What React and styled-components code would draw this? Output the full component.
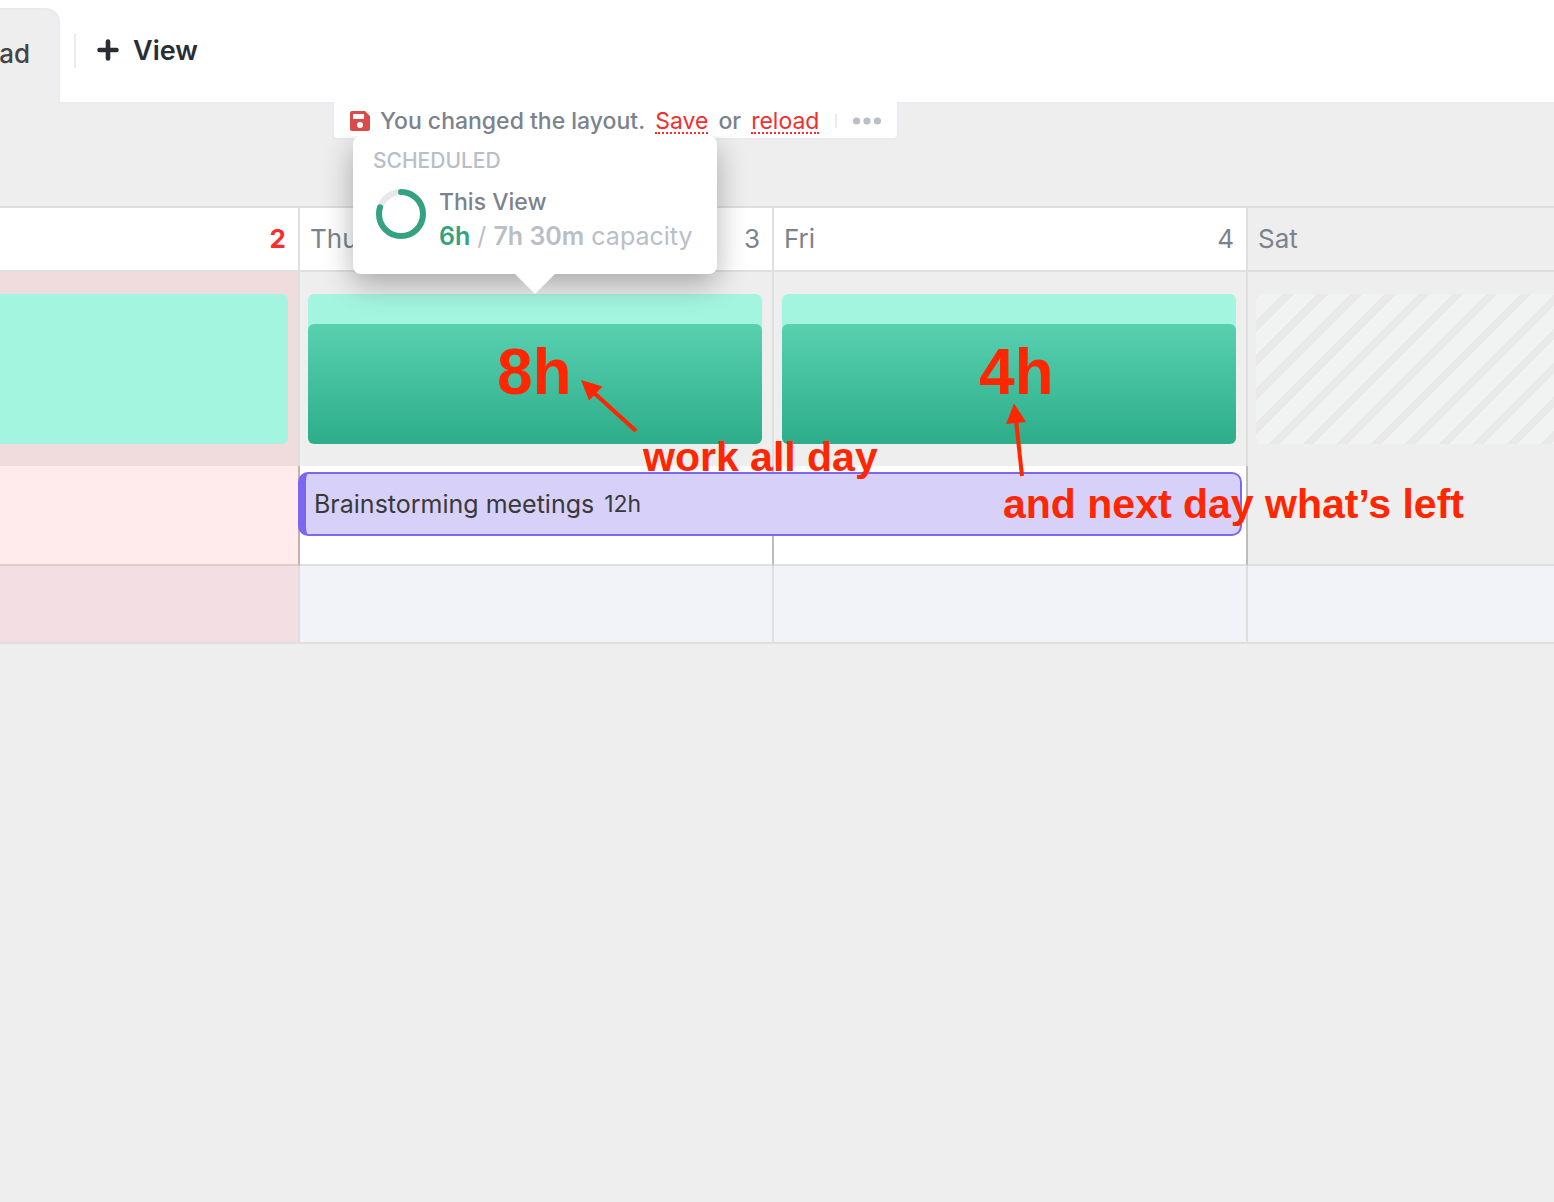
import React from "react";
import styled, { createGlobalStyle, css } from "styled-components";

const GlobalStyle = createGlobalStyle`
  *, *::before, *::after { box-sizing: border-box; }
  body {
    margin: 0;
    background: #eee;
    font-family: Inter, "Open Sans", sans-serif;
    color: #7c828d;
  }
  button { margin: 0; border: 0; background: none; font: inherit; cursor: pointer; }
`;

const Page = styled.div`
  min-height: 100vh;
  overflow: hidden;
`;

const TabBar = styled.header`
  display: flex;
  align-items: flex-start;
  padding-top: 8px;
  height: 104px;
  background: #fff;
  box-shadow: inset 0 -2px #e9ebf0;
`;

const Tab = styled.button`
  && {
    width: 60px;
    height: 96px;
    padding: 0 28px 8px 0;
    border: 2px solid #e9ebf0;
    border-width: 2px 2px 0 0;
    border-radius: 0 14px 0 0;
    background: #eee;
    color: #444;
    font-size: 26px;
    font-weight: 500;
    display: flex;
    align-items: center;
    justify-content: flex-end;
  }
`;

const Divider = styled.span`
  width: 2px;
  height: ${(p) => p.$height}px;
  margin: ${(p) => p.$margin};
  background: #e9ebf0;
`;

const AddView = styled.button`
  && {
    display: flex;
    align-items: center;
    gap: 14px;
    height: 84px;
    padding: 0;
    color: #292d34;
    font-size: 27px;
    font-weight: 600;
  }
`;

const NoticeArea = styled.div`
  display: flex;
  height: 104px;
  margin-top: -2px;
  padding-left: 332px;
`;

const Notice = styled.div`
  display: flex;
  align-items: center;
  height: 38px;
  padding: 2px 16px 0;
  white-space: nowrap;
  background: #fff;
  border: 2px solid #e9ebf0;
  border-top: 0;
  border-radius: 0 0 6px 6px;
  font-size: 23px;
  line-height: 28px;
  font-weight: 500;
`;

const NoticeText = styled.span`
  display: flex;
  gap: 10px;
  margin-left: 10px;
`;

const NoticeLink = styled.a`
  height: 27px;
  color: #f12f2f;
  font-weight: 400;
  text-decoration: none;
  border-bottom: 2px dotted #f12f2f;
`;

const MoreButton = styled.button`
  && { display: flex; padding: 0; }
`;

const Board = styled.main`
  position: relative;
  border-top: 2px solid #dfdfdf;
`;

const Row = styled.div`
  display: grid;
  grid-template-columns: 300fr 474fr 474fr 306fr;
  height: ${(p) => p.$height}px;
`;

const Cell = styled.div`
  grid-row: 1;
  min-width: 0;
  background: ${(p) => p.$bg};
  border-right: 2px solid ${(p) => p.$line || "#dfdfdf"};
  border-bottom: ${(p) => (p.$bottom ? `2px solid ${p.$bottom}` : "0")};
  &:nth-child(1) { grid-column: 1; }
  &:nth-child(2) { grid-column: 2; }
  &:nth-child(3) { grid-column: 3; }
  &:nth-child(4) { grid-column: 4; border-right: 0; }
`;

const DayCell = styled(Cell)`
  display: flex;
  align-items: center;
  justify-content: space-between;
  padding: 0 12px 0 10px;
  font-size: 26px;
  line-height: 32px;
`;

const DayNumber = styled.span`
  margin-left: auto;
  ${(p) => p.$today && css`color: #fd2b2b; font-weight: 700;`}
`;

const LoadCell = styled(Cell)`
  padding: 22px ${(p) => (p.$bleedRight ? 0 : 10)}px 22px ${(p) => (p.$bleedLeft ? 0 : 8)}px;
`;

const Capacity = styled.div`
  position: relative;
  display: flex;
  flex-direction: column;
  justify-content: flex-end;
  height: 150px;
  border-radius: ${(p) => p.$radius || "6px"};
  background: ${(p) => p.$off
    ? "repeating-linear-gradient(135deg, #e8e9e8 0 3px, #f1f3f2 3px 19px, #e8e9e8 19px 24px)"
    : "#a4f5e0"};
`;

const Load = styled.div`
  height: 120px;
  border-radius: 6px;
  background: linear-gradient(#58d1af, #2dad8a);
`;

const Popover = styled.section`
  position: absolute;
  z-index: 3;
  left: 50%;
  bottom: calc(100% + 20px);
  transform: translateX(-50%);
  width: 364px;
  height: 138px;
  padding: 12px 20px;
  border-radius: 8px;
  background: #fff;
  box-shadow: 0 10px 30px rgba(0, 0, 0, 0.3);
  clip-path: inset(0 -60px -60px -60px);
  white-space: nowrap;
  &::after {
    content: "";
    position: absolute;
    top: 100%;
    left: 50%;
    margin-left: -20px;
    border: 20px solid transparent;
    border-top-color: #fff;
    border-bottom: 0;
  }
`;

const PopoverTitle = styled.h2`
  margin: 0 0 12px;
  color: #b9bec7;
  font-size: 21px;
  line-height: 26px;
  font-weight: 500;
`;

const Summary = styled.div`
  display: flex;
  align-items: flex-start;
  gap: 10px;
`;

const SummaryName = styled.div`
  font-size: 23px;
  line-height: 32px;
  font-weight: 500;
`;

const SummaryHours = styled.div`
  color: #b9bec7;
  font-size: 25px;
  line-height: 36px;
  b { font-weight: 600; }
  b:first-child { color: #34a181; }
`;

const Task = styled.button`
  && {
    grid-row: 1;
    grid-column: 2 / 4;
    z-index: 1;
    display: flex;
    align-items: center;
    gap: 10px;
    height: 64px;
    margin: 6px 6px 0 -2px;
    padding: 0 8px;
    border: 2px solid #7b68ee;
    border-left-width: 8px;
    border-radius: 10px;
    background: #d7d1fa;
    color: #393939;
    font-size: 25px;
    text-align: left;
  }
`;

const TaskTime = styled.span`
  font-size: 23px;
`;

const Note = styled.span`
  position: absolute;
  z-index: 4;
  left: ${(p) => p.$x}px;
  top: ${(p) => p.$y}px;
  color: #ff2600;
  font-family: "Liberation Sans", Arial, sans-serif;
  font-weight: 700;
  font-size: ${(p) => (p.$large ? 64 : 41)}px;
  line-height: 1;
  white-space: nowrap;
`;

const Arrows = styled.svg`
  position: absolute;
  z-index: 4;
  left: 0;
  top: 0;
  pointer-events: none;
`;

const PlusIcon = () => (
  <svg width="22" height="22" viewBox="0 0 22 22" fill="none" stroke="currentColor" strokeWidth="4.600" strokeLinecap="round" aria-hidden="true">
    <path d="M11 2.500v17M2.500 11h17" />
  </svg>
);

const SaveIcon = () => (
  <svg width="20" height="20" viewBox="0 0 20 20" aria-hidden="true">
    <path fill="#d94b4b" fillRule="evenodd" d="M2 0h13l5 5v13a2 2 0 0 1-2 2H2a2 2 0 0 1-2-2V2a2 2 0 0 1 2-2ZM3 3v5h11V3ZM10 11a3 3 0 1 0 0 6a3 3 0 0 0 0-6Z" />
  </svg>
);

const MoreIcon = () => (
  <svg width="28" height="8" viewBox="0 0 28 8" fill="#b9bec7" aria-hidden="true">
    <circle cx="3.600" cy="4" r="3.600" />
    <circle cx="14" cy="4" r="3.600" />
    <circle cx="24.400" cy="4" r="3.600" />
  </svg>
);

const Ring = () => (
  <svg width="56" height="56" viewBox="0 0 56 56" fill="none" strokeWidth="6" aria-hidden="true">
    <circle cx="28" cy="28" r="22" stroke="#e6e8ea" />
    <circle cx="28" cy="28" r="22" stroke="#34a181" strokeLinecap="round" pathLength="100" strokeDasharray="80 100" transform="rotate(-90 28 28)" />
  </svg>
);

export default function App() {
  return (
    <Page>
      <GlobalStyle />
      <TabBar>
        <Tab type="button">ad</Tab>
        <Divider $height={34} $margin="26px 21px 0 14px" />
        <AddView type="button"><PlusIcon />View</AddView>
      </TabBar>

      <NoticeArea>
        <Notice>
          <SaveIcon />
          <NoticeText>
            <span>You changed the layout.</span>
            <NoticeLink href="#save">Save</NoticeLink>
            <span>or</span>
            <NoticeLink href="#reload">reload</NoticeLink>
          </NoticeText>
          <Divider $height={14} $margin="0 16px" />
          <MoreButton type="button" aria-label="More"><MoreIcon /></MoreButton>
        </Notice>
      </NoticeArea>

      <Board>
        <Row $height={64}>
          <DayCell $bg="#fff" $bottom="#dfdfdf"><DayNumber $today>2</DayNumber></DayCell>
          <DayCell $bg="#fff" $bottom="#dfdfdf">Thu<DayNumber>3</DayNumber></DayCell>
          <DayCell $bg="#fff" $bottom="#dfdfdf">Fri<DayNumber>4</DayNumber></DayCell>
          <DayCell $bg="#eee" $bottom="#dfdfdf">Sat</DayCell>
        </Row>

        <Row $height={194}>
          <LoadCell $bg="#f0dcdc" $bleedLeft><Capacity $radius="0 6px 6px 0" /></LoadCell>
          <LoadCell $bg="#eee">
            <Capacity>
              <Load />
              <Popover>
                <PopoverTitle>SCHEDULED</PopoverTitle>
                <Summary>
                  <Ring />
                  <div>
                    <SummaryName>This View</SummaryName>
                    <SummaryHours><b>6h</b> / <b>7h 30m</b> capacity</SummaryHours>
                  </div>
                </Summary>
              </Popover>
            </Capacity>
          </LoadCell>
          <LoadCell $bg="#eee"><Capacity><Load /></Capacity></LoadCell>
          <LoadCell $bg="#eee" $bleedRight><Capacity $off $radius="6px 0 0 6px" /></LoadCell>
        </Row>

        <Row $height={100}>
          <Cell $bg="#ffebeb" $line="#c6b0b0" $bottom="#e0cccc" />
          <Cell $bg="#fff" $line="#bdbdbd" $bottom="#dfdfdf" />
          <Cell $bg="#fff" $line="#bdbdbd" $bottom="#dfdfdf" />
          <Cell $bg="#eee" $bottom="#dfdfdf" />
          <Task type="button">Brainstorming meetings<TaskTime>12h</TaskTime></Task>
        </Row>

        <Row $height={78}>
          <Cell $bg="#f3dfe3" $bottom="#dfdfdf" />
          <Cell $bg="#f1f3f8" $bottom="#dfdfdf" />
          <Cell $bg="#f1f3f8" $bottom="#dfdfdf" />
          <Cell $bg="#f1f3f8" $bottom="#dfdfdf" />
        </Row>

        <Note $large $x={497} $y={132}>8h</Note>
        <Note $large $x={979} $y={132}>4h</Note>
        <Note $x={643} $y={229}>work all day</Note>
        <Note $x={1003} $y={276}>and next day what’s left</Note>
        <Arrows width="1100" height="300" viewBox="0 208 1100 300" fill="#ff2600" stroke="#ff2600" strokeWidth="4" aria-hidden="true">
          <path d="M636 431L592 391M1022 476L1016 420" />
          <path stroke="none" d="M581 380l21.500 6.500-13.500 14ZM1014 403.500l12 18.500-20 2Z" />
        </Arrows>
      </Board>
    </Page>
  );
}
